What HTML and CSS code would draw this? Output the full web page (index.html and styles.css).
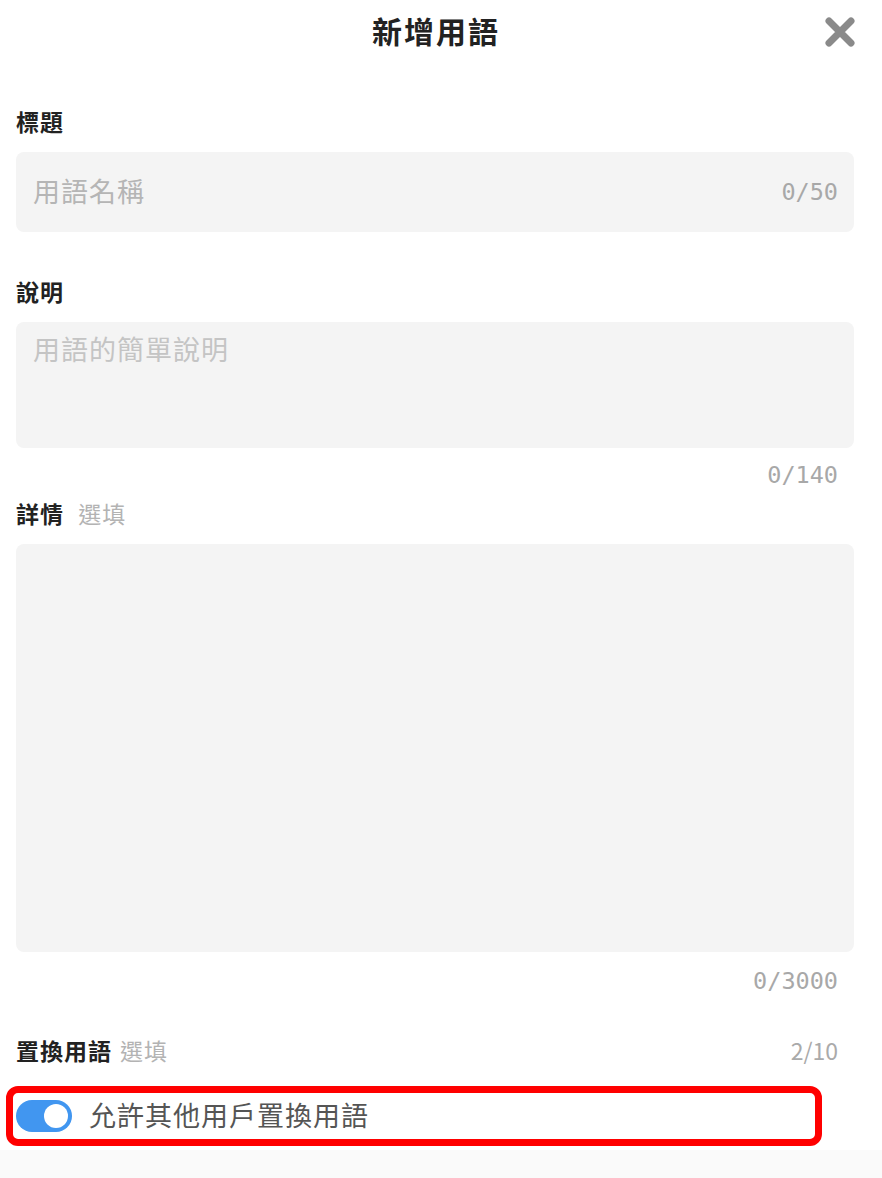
FILE: index.html
```html
<!DOCTYPE html>
<html lang="zh-Hant">
<head>
    <meta charset="UTF-8">
    <meta name="viewport" content="width=device-width, initial-scale=1.0">
    <title>新增用語</title>
    <link rel="stylesheet" href="styles.css">
</head>
<body>
    <div class="header">
        <h1 class="title">新增用語</h1>
        <span class="close">
            <svg width="32" height="32" viewBox="0 0 32 32">
                <path d="M5 5 L27 27 M27 5 L5 27" stroke="#8a8a8a" stroke-width="7" stroke-linecap="round"/>
            </svg>
        </span>
    </div>
    <div class="form">
        <div class="label label-first">標題</div>
        <div class="input">
            <span class="placeholder">用語名稱</span>
            <span class="count">0/50</span>
        </div>

        <div class="label label-gap">說明</div>
        <div class="textarea textarea-short">
            <span class="placeholder">用語的簡單說明</span>
        </div>
        <div class="count count-below">0/140</div>

        <div class="label label-near">詳情 <span class="optional">選填</span></div>
        <div class="textarea textarea-tall"></div>
        <div class="count count-below count-low">0/3000</div>

        <div class="label-row">
            <div class="label">置換用語<span class="optional optional-tight">選填</span></div>
            <span class="count-plain">2/10</span>
        </div>
        <div class="highlight">
            <span class="toggle"><span class="knob"></span></span>
            <span class="toggle-text">允許其他用戶置換用語</span>
        </div>
    </div>
    <div class="footer"></div>
</body>
</html>
```

FILE: styles.css
```css
*{
    margin: 0;
    padding: 0;
    box-sizing: border-box;
}
body{
    background-color: #fff;
    font-family: "Noto Sans CJK TC", "Noto Sans", sans-serif;
    color: #222;
}
.header{
    position: relative;
    height: 64px;
    display: flex;
    align-items: center;
    justify-content: center;
}
.title{
    font-size: 30px;
    font-weight: 700;
    letter-spacing: 2px;
    line-height: 40px;
    color: #222;
    margin-left: -10px;
    margin-top: -4px;
}
.close{
    position: absolute;
    right: 26px;
    top: 16px;
    width: 32px;
    height: 32px;
}
.form{
    padding: 0 28px 0 16px;
}
.label{
    font-size: 23px;
    font-weight: 700;
    line-height: 32px;
    letter-spacing: 1px;
    color: #222;
    margin-bottom: 15px;
}
.label-first{
    margin-top: 41px;
}
.label-gap{
    margin-top: 43px;
}
.label-near{
    margin-top: 6px;
}
.optional{
    font-weight: 400;
    color: #b3b3b3;
    margin-left: 8px;
    letter-spacing: 1px;
}
.optional-tight{
    margin-left: 8px;
}
.input{
    height: 80px;
    background-color: #f4f4f4;
    border-radius: 8px;
    display: flex;
    align-items: center;
    justify-content: space-between;
    padding: 0 16px 0 17px;
}
.placeholder{
    font-size: 27px;
    letter-spacing: 1px;
    color: #b5b5b5;
    line-height: 36px;
    margin-top: -3px;
}
.textarea{
    background-color: #f4f4f4;
    border-radius: 8px;
    padding: 12px 17px;
}
.textarea-short{
    height: 126px;
}
.textarea-short .placeholder{
    display: block;
    color: #c4c4c4;
}
.textarea-tall{
    height: 408px;
}
.count{
    font-family: "DejaVu Sans Mono", "Liberation Mono", monospace;
    font-size: 23.5px;
    color: #a8a8a8;
    line-height: 32px;
}
.count-below{
    text-align: right;
    padding-right: 16px;
    margin-top: 11px;
}
.count-low{
    margin-top: 13px;
}
.label-row{
    display: flex;
    justify-content: space-between;
    align-items: flex-start;
    margin-top: 37px;
    padding-right: 16px;
}
.label-row .label{
    margin-bottom: 0;
}
.count-plain{
    font-size: 23px;
    line-height: 32px;
    color: #aaa;
}
.highlight{
    margin-top: 20px;
    margin-left: -10px;
    width: 816px;
    height: 60px;
    border: 7px solid #ff0000;
    border-radius: 12px;
    display: flex;
    align-items: center;
    padding-left: 3px;
}
.toggle{
    position: relative;
    width: 56px;
    height: 32px;
    border-radius: 16px;
    background-color: #4196f0;
}
.knob{
    position: absolute;
    right: 4px;
    top: 4px;
    width: 24px;
    height: 24px;
    border-radius: 50%;
    background-color: #fff;
}
.toggle-text{
    margin-left: 17px;
    font-size: 27px;
    letter-spacing: 1px;
    color: #555;
    line-height: 36px;
    margin-top: -3px;
}
.footer{
    margin-top: 4px;
    height: 40px;
    background-color: #fafafa;
}
```
